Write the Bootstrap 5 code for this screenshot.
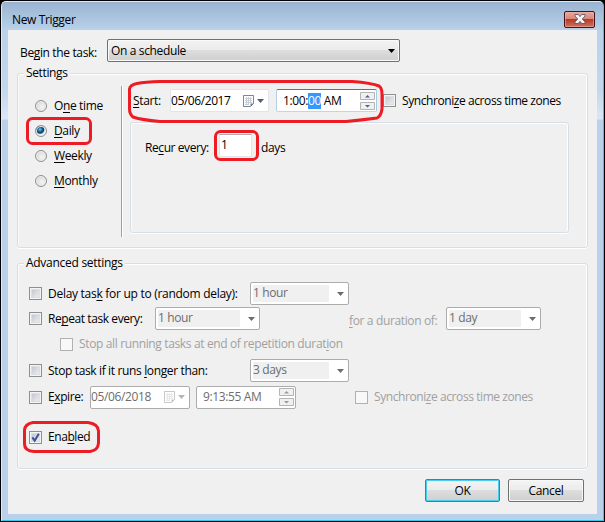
<!DOCTYPE html>
<html lang="en">
<head>
<meta charset="utf-8">
<title>New Trigger</title>
<link rel="stylesheet" href="https://cdn.jsdelivr.net/npm/bootstrap@5.3.0/dist/css/bootstrap.min.css">
<style>
body{background:#000;font:12px/16px "Open Sans","Noto Sans",sans-serif;letter-spacing:-.36px;color:#000;overflow:hidden}
svg{display:block;flex:none}
u{text-underline-offset:2px;text-decoration-thickness:1px;text-decoration-skip-ink:none}
.win{width:605px;height:522px;padding:1px;background:#000}
.glass{height:520px;border:1px solid #dfeaf5;border-right-color:#35c9e8;border-bottom-color:#35c9e8;border-radius:5px 5px 0 0;background:linear-gradient(#99b4d1,#b9d1ea 28px,#c3d8ee 90px,#dbe7f5 117px,#b9d1ea 118px);padding:0 6px 6px}
.titlebar{height:28px;padding:0 2px 0 4px}
.closer{width:31px;height:17px;border:1px solid #43121c;border-radius:2px;background:linear-gradient(#e9a79c,#d98578 48%,#b93a26 50%,#d0705c);box-shadow:inset 0 0 0 1px #eeb5aa88;margin-top:6px}
.client{background:#f0f0f0;height:484px;padding:9px 10px 0 9px}
.line{display:flex;align-items:center;white-space:nowrap}
.combo,.field{display:flex;align-items:center;height:23px;border:1px solid #707070;border-radius:2px;flex:none}
.combo{justify-content:space-between;padding:0 4px 0 3px;background:linear-gradient(#f2f2f2,#ebebeb 48%,#dddddd 50%,#cfcfcf);box-shadow:inset 0 0 0 1px #fafafa}
.combo.off,.field.off{background:#fff;border-color:#acacac;color:#6d6d6d;box-shadow:none}
.combo.off{padding:0 4px 0 2px}
.combo.off span{background:#f0f0f0;height:17px;flex:1;margin-right:8px}
.field{background:#fff;border-color:#e1e4ea;padding:0 1px 0 0}
.field.active{border-color:#3d7bad #a4c9e3 #b7d9ed #b5cfe7}
.sel{background:#3399ff;color:#fff;display:inline-block;height:16px}
.group{border:1px solid #d5dfe5;border-radius:3px;box-shadow:inset 0 1px #fff,inset -1px 0 #fff,inset 1px 0 #fafafa,0 1px #fff}
.legend-text{display:block;width:max-content;background:#f0f0f0;padding:0 2px;margin:-9px 0 0 6px}
.box{width:13px;height:13px;flex:none;border:1px solid #8e8f8f;background:linear-gradient(135deg,#b9bfc8,#f6f6f6);box-shadow:inset 0 0 0 1px #f4f4f4,inset 0 0 0 2px #dcdfe2;margin-right:6px}
.box.off{border-color:#b1b1b1;background:#f8f8f8;box-shadow:none}
.dot{width:12px;height:12px;flex:none;border:1px solid #8e8f8f;border-radius:50%;background:radial-gradient(circle at 60% 60%,#f5f5f5,#c9cdd2);box-shadow:inset 0 0 0 1px #f2f2f2;margin-right:7px}
.dot.on{background:radial-gradient(circle at 40% 35%,#7fd5f2 0,#1c6d9c 22%,#0c3f66 42%,#e8ecef 55%)}
.dim{color:#a0a0a0}
.begin{padding-left:3px}
.settings{height:175px;margin:11px 0 0;width:571px}
.kinds{width:104px;height:151px;margin-top:5px;border-right:1px solid #a0a0a0;box-shadow:1px 0 #fff;padding:7px 0 0 17px}
.kinds .line{height:25px}
.start{height:23px;margin-top:8px;padding-left:11px}
.sync{margin-left:6px}
.recur{width:439px;height:111px;margin:10px 0 0 8px;padding:11px 0 0 14px}
.num{width:33px;height:23px;background:#fff;border:1px solid #e2e3ea;border-top-color:#abadb3;padding-left:1px;margin-left:12px;line-height:20px}
.advanced{height:206px;width:571px;margin-top:15px}
.rows{padding-left:11px}
.r1{height:25px;margin-top:10px}
.r2{height:25px}
.r3{height:26px;padding-left:31px}
.r4{height:27px}
.r5{height:26px}
.r6{margin-top:19px}
.cmds{margin:10px 3px 0 0}
.cmd{width:76px;height:23px;border:1px solid #707070;border-radius:2px;background:linear-gradient(#f4f4f4,#ebebeb 48%,#dddddd 50%,#cfcfcf);box-shadow:inset 0 0 0 1px #f8f8f8;color:#000}
.cmd.go{width:75px;border-color:#3c7fb1;box-shadow:inset 0 0 0 1px #48cdf0}
.marks{left:0;top:0;pointer-events:none}
.w37{width:37px}.w62{width:62px}.w87{width:87px}.w97{width:97px}.w107{width:107px}.w202{width:202px}.w42{width:42px}
.c293{width:293px}.c99{width:99px}.c101{width:101px}.c105{width:105px}.c95{width:95px}.c100{width:100px}
.wide{letter-spacing:-.28px}
.snug{letter-spacing:-.42px}
.time{margin-left:7px;padding-left:6px}
.days{margin-left:9px}
.dur{margin-left:89px}
.expt{margin-left:6px;padding-left:6px}
.sync2{margin-left:59px}
</style>
</head>
<body>
<svg width="0" height="0" class="position-absolute">
<defs>
<symbol id="down" viewBox="0 0 7 4"><path d="M0 0h7L3.500 4z" fill="currentColor"/></symbol>
<symbol id="cal" viewBox="0 0 21 12"><path d="M.5.5h10v8l-3 3h-7z" fill="#fff" stroke="currentColor" stroke-opacity=".75"/><path d="M2 3.500h7M2 5.500h7M2 7.500h7M2 9.500h4M3.500 2v8M5.500 2v8M7.500 2v6" stroke="currentColor" opacity=".3"/><path d="M10.500 8.500h-3v3z" fill="currentColor" opacity=".8"/><path d="M14 4h7l-3.500 4z" fill="currentColor"/></symbol>
<symbol id="spin" viewBox="0 0 15 18"><path d="M.5.5h14v7H.5zM.5 10.500h14v7H.5z" fill="#f0f0f0" stroke="#b4b4b4"/><path d="M5 5.500h5L7.500 3zM5 13h5l-2.500 2.500z" fill="currentColor"/></symbol>
</defs></svg>
<div class="win position-relative">
<div class="glass">
  <div class="titlebar d-flex align-items-center justify-content-between">
    <span class="mt-2">New Trigger</span>
    <div class="closer d-flex align-items-center justify-content-center"><svg width="12" height="10" viewBox="0 0 12 10"><path d="M1 .5h3.200L6 2.600 7.800.5H11v1.600L8.300 5 11 7.900v1.600H7.800L6 7.400 4.200 9.500H1V7.900L3.700 5 1 2.100z" fill="#f4f4f4" stroke="#535666" stroke-width=".9"/></svg></div>
  </div>
  <div class="client">
    <div class="line begin"><span class="w87 pt-1">Be<u>g</u>in the task:</span>
      <div class="combo c293"><span>On a schedule</span><svg width="7" height="4"><use href="#down"/></svg></div></div>

    <div class="group settings">
      <span class="legend-text">Settings</span>
      <div class="d-flex">
        <div class="kinds">
          <div class="line"><i class="dot"></i><span>O<u>n</u>e time</span></div>
          <div class="line"><i class="dot on"></i><span><u>D</u>aily</span></div>
          <div class="line"><i class="dot"></i><span><u>W</u>eekly</span></div>
          <div class="line"><i class="dot"></i><span><u>M</u>onthly</span></div>
        </div>
        <div>
          <div class="line start"><span class="w37"><u>S</u>tart:</span>
            <div class="field c99 justify-content-between pe-1"><span class="snug">05/06/2017</span><svg width="21" height="12" color="#4b5f78"><use href="#cal"/></svg></div>
            <div class="field active c101 justify-content-between time"><span>1:00:<span class="sel">00</span> AM</span><svg width="15" height="18" color="#4a5f97"><use href="#spin"/></svg></div>
            <i class="box sync"></i><span class="snug">Synchroni<u>z</u>e across time zones</span></div>
          <div class="group recur"><div class="line"><span class="w62 pt-1 snug">Re<u>c</u>ur every:</span><div class="num">1</div><span class="days pt-1">days</span></div></div>
        </div>
      </div>
    </div>

    <div class="group advanced">
      <span class="legend-text wide">Advanced settings</span>
      <div class="rows">
        <div class="line r1"><i class="box"></i><span class="w202 wide">Delay tas<u>k</u> for up to (random delay):</span><div class="combo off c99"><span>1 hour</span><svg width="7" height="4"><use href="#down"/></svg></div></div>
        <div class="line r2"><i class="box"></i><span class="w107 snug">Re<u>p</u>eat task every:</span><div class="combo off c105"><span>1 hour</span><svg width="7" height="4"><use href="#down"/></svg></div><span class="dim w97 dur pt-1"><u>f</u>or a duration of:</span><div class="combo off c95"><span>1 day</span><svg width="7" height="4"><use href="#down"/></svg></div></div>
        <div class="line r3 dim"><i class="box off"></i><span>Stop all running tasks at end of repetition durat<u>i</u>on</span></div>
        <div class="line r4"><i class="box"></i><span class="w202">Stop task if it runs <u>l</u>onger than:</span><div class="combo off c99"><span>3 days</span><svg width="7" height="4"><use href="#down"/></svg></div></div>
        <div class="line r5"><i class="box"></i><span class="w42 snug">E<u>x</u>pire:</span><div class="field off c100 justify-content-between pe-1"><span>05/06/2018</span><svg width="21" height="12" color="#b4b6b4"><use href="#cal"/></svg></div><div class="field off c100 justify-content-between expt"><span>9:13:55 AM</span><svg width="15" height="18" color="#999"><use href="#spin"/></svg></div><i class="box off sync2"></i><span class="dim snug">Synchroni<u>z</u>e across time zones</span></div>
        <div class="line r6"><i class="box d-flex"><svg width="11" height="11" viewBox="0 0 11 11"><path d="M2.300 5.300l2.400 3.400L8.800 1.800" fill="none" stroke="#3b519b" stroke-width="2"/></svg></i><span class="snug">Ena<u>b</u>led</span></div>
      </div>
    </div>
    <div class="d-flex justify-content-end gap-2 cmds"><div class="cmd go d-flex align-items-center justify-content-center">OK</div><div class="cmd d-flex align-items-center justify-content-center">Cancel</div></div>
  </div>
</div>
<svg class="marks position-absolute" width="605" height="522" fill="none" stroke="#ed1c24" stroke-width="3" stroke-linejoin="round">
<path d="M137 83.500Q145 82 160 81.500H352Q372 83 379 86Q382 88 382 94V109Q381 116 377 118Q362 120 346 121.500H160Q142 120 133 117Q129.500 114 129.500 109V89Q130 85 137 83.500z"/>
<rect x="27.500" y="118.500" width="63" height="25" rx="5"/>
<rect x="215.500" y="131.500" width="42" height="28" rx="5"/>
<path d="M33 422.500H88Q98.500 424 98.500 431V443Q98 450.500 90 451.500H34Q24.500 451 24.500 444V430Q25 424 33 422.500z"/>
</svg>
</div>
<script src="https://cdn.jsdelivr.net/npm/bootstrap@5.3.0/dist/js/bootstrap.bundle.min.js"></script>
</body>
</html>
